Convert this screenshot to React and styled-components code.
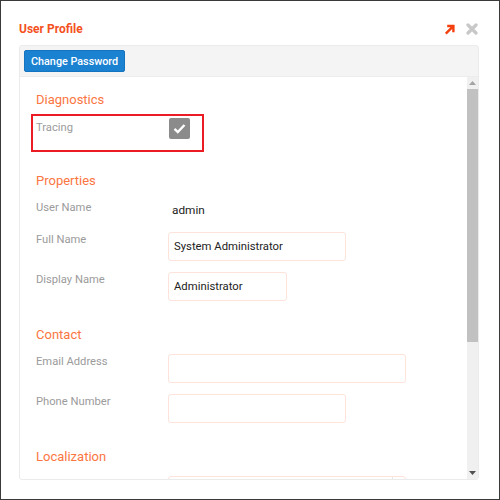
import React from 'react'
import styled, { createGlobalStyle } from 'styled-components'

const GlobalStyle = createGlobalStyle`
  html, body { margin: 0; padding: 0; background: #fff; }
  body { font-family: Roboto, "Liberation Sans", Arial, sans-serif; }
  * { box-sizing: border-box; }
`

const Frame = styled.div`
  width: 500px;
  height: 500px;
  border: 1px solid #3a3a3a;
  background: #fff;
  display: flex;
  flex-direction: column;
  overflow: hidden;
`

const Header = styled.div`
  display: flex;
  align-items: center;
  height: 18px;
  margin: 19px 21px 7px 18px;
`

const Title = styled.div`
  flex: 1;
  color: #f4511e;
  font-size: 12px;
  font-weight: 700;
`

const HeaderIcons = styled.div`
  display: flex;
  align-items: center;
  gap: 11px;
`

const Panel = styled.div`
  margin-left: 18px;
  width: 460px;
  height: 435px;
  border: 1px solid #ebebeb;
  border-radius: 3px;
  background: #f4f4f4;
  display: flex;
  flex-direction: column;
  overflow: hidden;
`

const Toolbar = styled.div`
  height: 31px;
  padding: 4px 4px;
  border-bottom: 1px solid #ececec;
  display: flex;
  align-items: flex-start;
`

const PrimaryButton = styled.button`
  height: 22px;
  padding: 0 6px;
  border: 1px solid #1574c0;
  border-radius: 2px;
  background: #1b82d2;
  color: #fff;
  font-family: inherit;
  font-size: 10.8px;
  font-weight: 500;
  cursor: pointer;
`

const Body = styled.div`
  flex: 1;
  display: flex;
  background: #fff;
  min-height: 0;
`

const Scroll = styled.div`
  flex: 1;
  overflow: hidden;
  padding: 14px 0 0 16px;
`

const Section = styled.div`
  margin-bottom: 25px;
`

const SectionTitle = styled.div`
  color: #fb7641;
  font-size: 13px;
  line-height: 18px;
  margin-bottom: 10px;
`

const Rows = styled.div`
  display: flex;
  flex-direction: column;
  gap: 11px;
`

const Row = styled.div`
  display: flex;
  align-items: flex-start;
  min-height: ${p => (p.$tall ? '29px' : '21px')};
`

const HighlightRow = styled(Row)`
  width: 163px;
  min-height: 28px;
  outline: 2px solid #ec1c24;
  outline-offset: 3px;
`

const Label = styled.div`
  width: 132px;
  flex-shrink: 0;
  color: #9b9b9b;
  font-size: 11.2px;
  line-height: 16px;
  padding-top: ${p => p.$pad || 0}px;
`

const Value = styled.div`
  color: #222;
  font-size: 11.8px;
  line-height: 16px;
  padding: 2px 4px;
`

const Input = styled.div`
  width: ${p => p.$w}px;
  height: 29px;
  border: 1px solid #fde3da;
  border-radius: 3px;
  padding: 0 5px;
  display: flex;
  align-items: center;
  color: #222;
  font-size: 11.3px;
`

const Select = styled(Input)`
  justify-content: flex-end;
  padding: 0;
`

const SelectArrow = styled.div`
  width: 13px;
  height: 100%;
  border-left: 1px solid #e6e6e6;
`

const Check = styled.div`
  width: 21px;
  height: 21px;
  margin: -1px 0 0 1px;
  border-radius: 2px;
  background: #8b8b8b;
  display: flex;
  align-items: center;
  justify-content: center;
`

const ScrollTrack = styled.div`
  width: 11px;
  background: #f0f0f0;
  display: flex;
  flex-direction: column;
  align-items: stretch;
`

const ScrollButton = styled.div`
  height: 12px;
  display: flex;
  align-items: center;
  justify-content: center;
`

const Thumb = styled.div`
  height: 253px;
  background: #c1c1c1;
`

const Spacer = styled.div`
  flex: 1;
`

const Tri = ({ down, color }) => (
  <svg width="7" height="4" viewBox="0 0 7 4">
    <polygon points={down ? '0,0 7,0 3.5,4' : '0,4 7,4 3.5,0'} fill={color} />
  </svg>
)

const App = () => (
  <>
    <GlobalStyle />
    <Frame>
      <Header>
        <Title>User Profile</Title>
        <HeaderIcons>
          <svg width="11" height="11" viewBox="0 0 11 11">
            <path d="M1.8 9.6 L8.8 2.6 M3.2 2 H9.4 V8.2" stroke="#f4400e" strokeWidth="2.4" fill="none" />
          </svg>
          <svg width="12" height="12" viewBox="0 0 12 12">
            <path d="M2 2 L10 10 M10 2 L2 10" stroke="#c8c8c8" strokeWidth="3.2" strokeLinecap="round" />
          </svg>
        </HeaderIcons>
      </Header>
      <Panel>
        <Toolbar>
          <PrimaryButton>Change Password</PrimaryButton>
        </Toolbar>
        <Body>
          <Scroll>
            <Section>
              <SectionTitle>Diagnostics</SectionTitle>
              <HighlightRow>
                <Label $pad={1}>Tracing</Label>
                <Check>
                  <svg width="13" height="11" viewBox="0 0 13 11">
                    <path d="M1.5 5.8 L4.8 9 L11.5 2" stroke="#fff" strokeWidth="2.4" fill="none" />
                  </svg>
                </Check>
              </HighlightRow>
            </Section>
            <Section>
              <SectionTitle>Properties</SectionTitle>
              <Rows>
                <Row>
                  <Label>User Name</Label>
                  <Value>admin</Value>
                </Row>
                <Row $tall>
                  <Label>Full Name</Label>
                  <Input $w={178}>System Administrator</Input>
                </Row>
                <Row $tall>
                  <Label>Display Name</Label>
                  <Input $w={119}>Administrator</Input>
                </Row>
              </Rows>
            </Section>
            <Section>
              <SectionTitle>Contact</SectionTitle>
              <Rows>
                <Row $tall>
                  <Label>Email Address</Label>
                  <Input $w={238} />
                </Row>
                <Row $tall>
                  <Label>Phone Number</Label>
                  <Input $w={178} />
                </Row>
              </Rows>
            </Section>
            <Section>
              <SectionTitle>Localization</SectionTitle>
              <Rows>
                <Row $tall>
                  <Label $pad={5}>Language</Label>
                  <Select $w={238}>
                    <SelectArrow />
                  </Select>
                </Row>
                <Row $tall>
                  <Label $pad={5}>Time Zone</Label>
                  <Select $w={238}>
                    <SelectArrow />
                  </Select>
                </Row>
              </Rows>
            </Section>
          </Scroll>
          <ScrollTrack>
            <ScrollButton><Tri color="#a3a3a3" /></ScrollButton>
            <Thumb />
            <Spacer />
            <ScrollButton><Tri down color="#505050" /></ScrollButton>
          </ScrollTrack>
        </Body>
      </Panel>
    </Frame>
  </>
)

export default App
